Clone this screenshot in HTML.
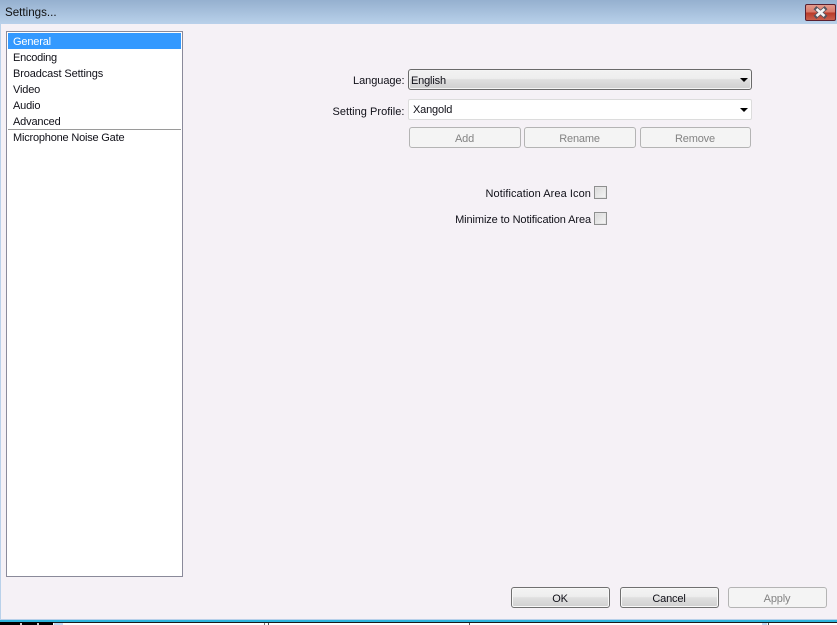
<!DOCTYPE html>
<html><head><meta charset="utf-8">
<style>
html,body{margin:0;padding:0}
body{width:837px;height:625px;position:relative;overflow:hidden;background:#f5f1f6;font:11px/13px "Liberation Sans",sans-serif;letter-spacing:-.17px;color:#101018}
div{position:absolute;box-sizing:border-box;white-space:nowrap}
.tx{height:13px}
.r{text-align:right}
.btn{border:1px solid #707070;border-radius:3px;height:21px;text-align:center;line-height:21px;padding:1px 1px 0 0;background:linear-gradient(#f3f3f3 0,#eeeeee 45%,#e0e0e0 50%,#d0d0d0 100%);box-shadow:inset 0 0 0 1px #f8f8f8}
.dis{border:1px solid #b4b4b4;background:#f4f4f4;color:#838383;box-shadow:none}
.cb{width:13px;height:13px;border:1px solid #8e8f8f;background:linear-gradient(135deg,#d8d8d8,#f6f6f6);box-shadow:inset 0 0 0 1px #e4e4e4}
.arr{width:0;height:0;border-left:4px solid transparent;border-right:4px solid transparent;border-top:4px solid #000}
</style></head><body>
<div style="left:0;top:0;width:837px;height:24px;background:linear-gradient(#95b0cf,#b9d1ea)"></div>
<div style="left:0;top:24px;width:1px;height:598px;background:#b9d1ea"></div>
<div style="left:5px;top:6px;font-size:11.6px;letter-spacing:0;color:#111">Settings...</div>
<div style="left:805px;top:4px;width:31px;height:17px;border:1px solid #5a2030;border-radius:2px;background:linear-gradient(#e39a8c 0,#d8796a 48%,#b83a28 52%,#c9604e 100%)">
<svg width="29" height="15" style="position:absolute;left:0;top:0"><path d="M10.5 4L18.5 11M18.5 4L10.5 11" stroke="#55555f" stroke-width="4.2" stroke-linecap="square"/><path d="M10.5 4L18.5 11M18.5 4L10.5 11" stroke="#f4f4f4" stroke-width="2.6"/></svg></div>

<div style="left:6px;top:31px;width:177px;height:546px;background:#fff;border:1px solid #8a8a9a"></div>
<div style="left:8px;top:33px;width:173px;height:16px;background:#3399ff"></div>
<div class="tx" style="left:13px;top:36px;color:#fff">General</div>
<div class="tx" style="left:13px;top:52px;letter-spacing:-.25px">Encoding</div>
<div class="tx" style="left:13px;top:68px;letter-spacing:-.12px">Broadcast Settings</div>
<div class="tx" style="left:13px;top:84px">Video</div>
<div class="tx" style="left:13px;top:100px">Audio</div>
<div class="tx" style="left:13px;top:116px">Advanced</div>
<div style="left:8px;top:129px;width:173px;height:1px;background:#9a9a9a"></div>
<div class="tx" style="left:13px;top:132px;letter-spacing:-.2px">Microphone Noise Gate</div>

<div class="tx r" style="left:300px;width:104.5px;top:75px;letter-spacing:-.06px">Language:</div>
<div style="left:408px;top:69px;width:344px;height:21px;border:1px solid #6a6a6a;border-radius:3px;background:linear-gradient(#f2f2f2 0,#eeeeee 45%,#dfdfdf 50%,#cfcfcf 100%);box-shadow:inset 0 0 0 1px #f4f4f4"></div>
<div class="tx" style="left:411px;top:75px">English</div>
<div class="arr" style="left:740px;top:78px"></div>

<div class="tx r" style="left:300px;width:104.5px;top:106px;letter-spacing:.03px">Setting Profile:</div>
<div style="left:408px;top:99px;width:344px;height:21px;border:1px solid #dcdcdc;border-radius:2px;background:#fff"></div>
<div class="tx" style="left:413px;top:104px">Xangold</div>
<div class="arr" style="left:740px;top:108px"></div>

<div class="btn dis" style="left:409px;top:127px;width:112px">Add</div>
<div class="btn dis" style="left:524px;top:127px;width:112px">Rename</div>
<div class="btn dis" style="left:640px;top:127px;width:111px">Remove</div>

<div class="tx r" style="left:400px;width:191px;top:188px;letter-spacing:.07px">Notification Area Icon</div>
<div class="cb" style="left:594px;top:186px"></div>
<div class="tx r" style="left:400px;width:191px;top:214px;letter-spacing:-.1px">Minimize to Notification Area</div>
<div class="cb" style="left:594px;top:212px"></div>

<div class="btn" style="left:511px;top:587px;width:99px">OK</div>
<div class="btn" style="left:620px;top:587px;width:99px">Cancel</div>
<div class="btn dis" style="left:728px;top:587px;width:99px">Apply</div>

<div style="left:0;top:619px;width:837px;height:1px;background:#b9d1ea"></div>
<div style="left:0;top:620px;width:837px;height:2px;background:#2db4dc"></div>
<div style="left:0;top:622px;width:837px;height:1px;background:#1a1a1a"></div>
<div style="left:0;top:623px;width:837px;height:2px;background:#fff"></div>
<div style="left:0;top:622px;width:53px;height:3px;background:#000"></div>
<div style="left:20px;top:623px;width:2px;height:2px;background:#ccc"></div>
<div style="left:37px;top:623px;width:2px;height:2px;background:#ccc"></div>
<div style="left:54px;top:623px;width:9px;height:2px;background:#c4d8f0"></div>
<div style="left:264px;top:623px;width:1px;height:2px;background:#777"></div>
<div style="left:268px;top:623px;width:1px;height:2px;background:#555"></div>
<div style="left:469px;top:623px;width:1px;height:2px;background:#555"></div>
<div style="left:762px;top:623px;width:5px;height:2px;background:#c4d8f0"></div>
<div style="left:768px;top:623px;width:1px;height:2px;background:#555"></div>
</body></html>
